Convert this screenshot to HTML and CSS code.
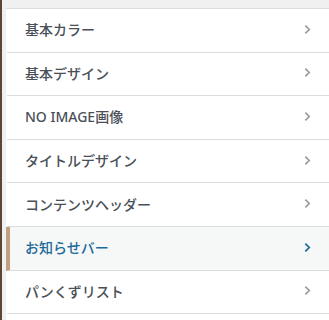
FILE: index.html
```html
<!DOCTYPE html>
<html lang="ja">
<head>
    <meta charset="UTF-8">
    <meta name="viewport" content="width=device-width, initial-scale=1.0">
    <title>カスタマイズ</title>
    <link rel="stylesheet" href="styles.css">
</head>
<body>
    <div class="sidebar">
        <div class="top-band"></div>
        <ul class="sections">
            <li class="section"><span>基本カラー</span><svg class="chev" viewBox="0 0 8 12"><path d="M1.5 1.5 L6 6 L1.5 10.5"/></svg></li>
            <li class="section"><span>基本デザイン</span><svg class="chev" viewBox="0 0 8 12"><path d="M1.5 1.5 L6 6 L1.5 10.5"/></svg></li>
            <li class="section"><span>NO IMAGE画像</span><svg class="chev" viewBox="0 0 8 12"><path d="M1.5 1.5 L6 6 L1.5 10.5"/></svg></li>
            <li class="section"><span>タイトルデザイン</span><svg class="chev" viewBox="0 0 8 12"><path d="M1.5 1.5 L6 6 L1.5 10.5"/></svg></li>
            <li class="section"><span>コンテンツヘッダー</span><svg class="chev" viewBox="0 0 8 12"><path d="M1.5 1.5 L6 6 L1.5 10.5"/></svg></li>
            <li class="section active"><span>お知らせバー</span><svg class="chev" viewBox="0 0 8 12"><path d="M1.5 1.5 L6 6 L1.5 10.5"/></svg></li>
            <li class="section"><span>パンくずリスト</span><svg class="chev" viewBox="0 0 8 12"><path d="M1.5 1.5 L6 6 L1.5 10.5"/></svg></li>
            <li class="section"><span></span></li>
        </ul>
    </div>
</body>
</html>
```

FILE: styles.css
```css
body { margin: 0; background: #f0f0f1; font-family: "Noto Sans", "Noto Sans CJK JP", sans-serif; }
.sidebar { height: 320px; border-left: 2px solid #5b4535; background: #f0f0f1; padding-left: 4px; overflow: hidden; }
.top-band { height: 8px; }
.sections { list-style: none; margin: 0; padding: 0; background: #fff; border-top: 1px solid #dcdcde; }
.section { height: 42.6px; border-bottom: 1px solid #dcdcde; display: flex; align-items: center; justify-content: space-between; padding: 0 18px 0 18px; font-size: 14px; font-weight: 500; color: #4a5057; margin-left: 1px; }
.section span { position: relative; top: -1px; }
.chev { width: 7px; height: 11px; fill: none; stroke: #9a9da1; stroke-width: 2; position: relative; top: -1px; }
.section.active { background: #f6f7f7; border-left: 4px solid #c0a080; margin-left: 0; padding-left: 15px; color: #1d6a99; }
.section.active .chev { stroke: #1d6a99; }
```
